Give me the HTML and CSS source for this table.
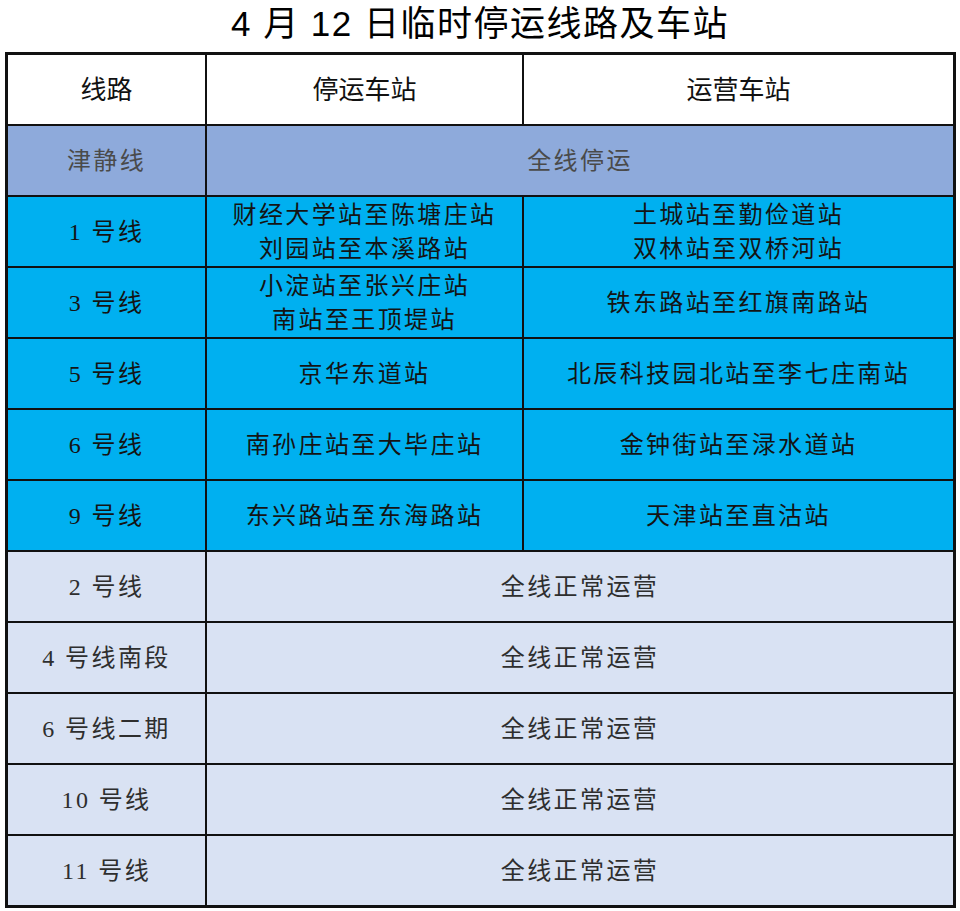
FILE: index.html
```html
<!DOCTYPE html>
<html lang="zh-CN">
<head>
<meta charset="utf-8">
<title>4 月 12 日临时停运线路及车站</title>
<link rel="stylesheet" href="styles.css">
</head>
<body>
<h1 class="title">4 月 12 日临时停运线路及车站</h1>
<div class="table">
  <div class="cell head">线路</div>
  <div class="cell head">停运车站</div>
  <div class="cell head">运营车站</div>

  <div class="cell full">津静线</div>
  <div class="cell full span">全线停运</div>

  <div class="cell stop">1 号线</div>
  <div class="cell stop"><span>财经大学站至陈塘庄站</span><span>刘园站至本溪路站</span></div>
  <div class="cell stop"><span>土城站至勤俭道站</span><span>双林站至双桥河站</span></div>

  <div class="cell stop">3 号线</div>
  <div class="cell stop"><span>小淀站至张兴庄站</span><span>南站至王顶堤站</span></div>
  <div class="cell stop">铁东路站至红旗南路站</div>

  <div class="cell stop">5 号线</div>
  <div class="cell stop">京华东道站</div>
  <div class="cell stop">北辰科技园北站至李七庄南站</div>

  <div class="cell stop">6 号线</div>
  <div class="cell stop">南孙庄站至大毕庄站</div>
  <div class="cell stop">金钟街站至渌水道站</div>

  <div class="cell stop">9 号线</div>
  <div class="cell stop">东兴路站至东海路站</div>
  <div class="cell stop">天津站至直沽站</div>

  <div class="cell normal">2 号线</div>
  <div class="cell normal span">全线正常运营</div>

  <div class="cell normal">4 号线南段</div>
  <div class="cell normal span">全线正常运营</div>

  <div class="cell normal">6 号线二期</div>
  <div class="cell normal span">全线正常运营</div>

  <div class="cell normal">10 号线</div>
  <div class="cell normal span">全线正常运营</div>

  <div class="cell normal">11 号线</div>
  <div class="cell normal span">全线正常运营</div>
</div>
</body>
</html>
```
FILE: styles.css
```css
html, body {
  margin: 0;
  padding: 0;
  background: #ffffff;
}

.title {
  margin: 0;
  height: 52px;
  line-height: 47px;
  text-align: center;
  font-family: "Liberation Sans", "Noto Sans CJK SC", sans-serif;
  font-size: 35px;
  font-weight: 400;
  letter-spacing: 1.5px;
  color: #000;
}

.table {
  margin-left: 5px;
  width: 951px;
  box-sizing: border-box;
  display: grid;
  grid-template-columns: 197px 315px 429px;
  grid-auto-rows: 69px;
  gap: 2px;
  padding: 3px;
  background: #111111;
}

.cell {
  display: flex;
  flex-direction: column;
  align-items: center;
  justify-content: center;
  text-align: center;
  font-family: "Liberation Serif", "Noto Sans CJK SC", serif;
  font-size: 24px;
  letter-spacing: 2.4px;
  line-height: 34px;
  white-space: nowrap;
}

.span {
  grid-column: 2 / 4;
}

.head {
  background: #ffffff;
  color: #111;
  font-family: "Liberation Sans", "Noto Sans CJK SC", sans-serif;
  font-size: 26px;
  letter-spacing: 0;
}

.full {
  background: #8eaadb;
  color: #4a4a4a;
}

.stop {
  background: #00b0f0;
  color: #141414;
}

.normal {
  background: #d9e2f3;
  color: #2e2e2e;
}
```
